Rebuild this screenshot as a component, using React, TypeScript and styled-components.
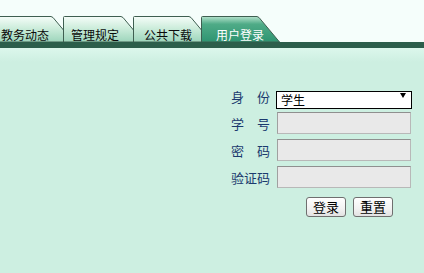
import React from "react";
import styled, { createGlobalStyle } from "styled-components";

const GlobalStyle = createGlobalStyle`
  html, body {
    margin: 0;
    padding: 0;
    background: #cdefe1;
    font-family: "Noto Sans CJK SC", "Liberation Sans", sans-serif;
  }
`;

const tabs = [
  { label: "教务动态", body: 59, pad: 8, active: false },
  { label: "管理规定", body: 59, pad: 8, active: false },
  { label: "公共下载", body: 57, pad: 11, active: false },
  { label: "用户登录", body: 57, pad: 15, active: true },
];

const SLANT = 22;

const Page = styled.div`
  min-height: 100vh;
  overflow: hidden;
`;

const Header = styled.div`
  background: #f5fefb;
  padding-top: 16px;
`;

const TabStrip = styled.div`
  display: flex;
  margin-left: -7px;
  height: 26px;
`;

const Tab = styled.div<{ $w: number; $pad: number; $active: boolean }>`
  position: relative;
  width: ${(p) => p.$w}px;
  height: 26px;
  margin-left: -11px;
  padding: 13px 0 0 ${(p) => p.$pad}px;
  box-sizing: border-box;
  font-size: 12px;
  line-height: 12px;
  color: ${(p) => (p.$active ? "#ffffff" : "#0a0a0a")};
  white-space: nowrap;
  cursor: pointer;

  &:first-child {
    margin-left: 0;
  }

  svg {
    position: absolute;
    left: 0;
    top: 0;
  }

  span {
    position: relative;
  }
`;

const DarkBar = styled.div`
  height: 6px;
  background: #2c5e4b;
`;

const Band = styled.div`
  height: 14px;
  background: linear-gradient(180deg, #dcf7ec 0%, #cdefe1 100%);
`;

const Content = styled.div`
  display: flex;
  justify-content: flex-end;
  padding: 24px 12px 0 0;
`;

const Form = styled.div`
  display: grid;
  grid-template-columns: auto 136px;
  column-gap: 6px;
  row-gap: 5px;
  align-items: center;
`;

const Label = styled.div`
  font-size: 13px;
  color: #1b3a6e;
  text-align: right;
  white-space: nowrap;
`;

const SelectWrap = styled.div`
  position: relative;
  height: 18px;
  margin-bottom: 3px;
`;

const Select = styled.select`
  appearance: none;
  width: 100%;
  height: 18px;
  box-sizing: border-box;
  border: 1px solid #000;
  background: #fff;
  font-family: inherit;
  font-size: 12px;
  line-height: 16px;
  padding: 0 0 0 4px;
  color: #000;
  border-radius: 0;
  outline: none;
`;

const Arrow = styled.span`
  position: absolute;
  right: 6px;
  top: 7px;
  width: 0;
  height: 0;
  border-left: 3px solid transparent;
  border-right: 3px solid transparent;
  border-top: 5px solid #000;
  pointer-events: none;
`;

const Input = styled.input`
  width: 134px;
  height: 22px;
  box-sizing: border-box;
  border: 1px solid #b8b8b8;
  border-top-color: #8f8f8f;
  border-left-color: #a0a0a0;
  background: #e9e9e9;
  outline: none;
  margin-left: 1px;
`;

const Buttons = styled.div`
  grid-column: 2;
  display: flex;
  gap: 7px;
  padding: 4px 0 0 30px;
`;

const Button = styled.button`
  width: 40px;
  height: 20px;
  padding: 0;
  box-sizing: border-box;
  border: 1px solid #6f6f6f;
  border-radius: 3px;
  background: linear-gradient(180deg, #ffffff 0%, #f2f2f2 60%, #e2e2e2 100%);
  font-family: inherit;
  font-size: 13px;
  line-height: 16px;
  color: #000;
  cursor: pointer;
`;

const TabShape = ({ w, body, active, id }: { w: number; body: number; active: boolean; id: string }) => (
  <svg width={w} height={26} viewBox={`0 0 ${w} 26`}>
    <defs>
      <linearGradient id={id} x1="0" y1="0" x2="0" y2="1">
        {active ? (
          <>
            <stop offset="0" stopColor="#b4e2cc" />
            <stop offset="0.3" stopColor="#4fab87" />
            <stop offset="1" stopColor="#2e9471" />
          </>
        ) : (
          <>
            <stop offset="0" stopColor="#f6fdf9" />
            <stop offset="0.45" stopColor="#cdeddc" />
            <stop offset="1" stopColor="#9dd5bb" />
          </>
        )}
      </linearGradient>
    </defs>
    <path
      d={`M0.5 26 L0.5 1.5 Q0.5 0.5 1.5 0.5 L${body - 1} 0.5 L${body + 1} 1.5 L${w - 0.5} 26 Z`}
      fill={`url(#${id})`}
      stroke="#3f5f51"
      strokeWidth={1}
    />
  </svg>
);

export default function App() {
  return (
    <Page>
      <GlobalStyle />
      <Header>
        <TabStrip>
          {tabs.map((t, i) => {
            const w = t.body + SLANT;
            return (
              <Tab key={t.label} $w={w} $pad={t.pad} $active={t.active}>
                <TabShape w={w} body={t.body} active={t.active} id={`tabfill${i}`} />
                <span>{t.label}</span>
              </Tab>
            );
          })}
        </TabStrip>
      </Header>
      <DarkBar />
      <Band />
      <Content>
        <Form>
          <Label>身　份</Label>
          <SelectWrap>
            <Select defaultValue="学生">
              <option>学生</option>
              <option>教师</option>
            </Select>
            <Arrow />
          </SelectWrap>
          <Label>学　号</Label>
          <Input type="text" />
          <Label>密　码</Label>
          <Input type="password" />
          <Label>验证码</Label>
          <Input type="text" />
          <Buttons>
            <Button>登录</Button>
            <Button>重置</Button>
          </Buttons>
        </Form>
      </Content>
    </Page>
  );
}
